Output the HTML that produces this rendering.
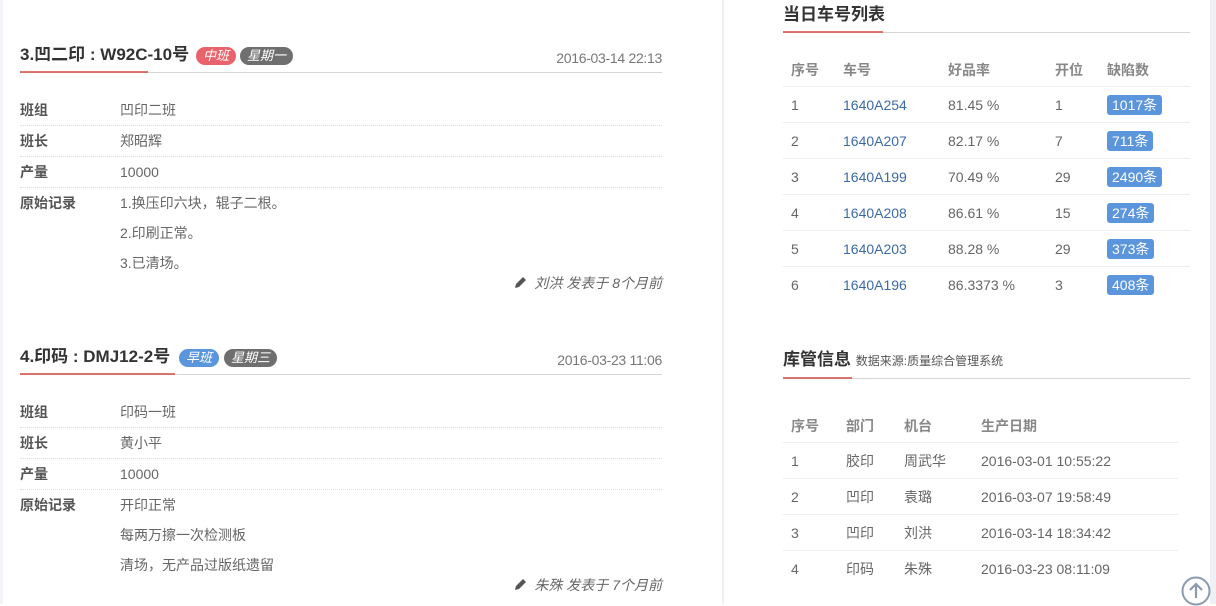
<!DOCTYPE html>
<html><head><meta charset="utf-8"><style>
*{margin:0;padding:0;box-sizing:border-box}
body{width:1216px;height:604px;overflow:hidden;background:#fff;position:relative;font-family:"Liberation Sans","Noto Sans CJK SC",sans-serif;font-size:14px;color:#666}
.a{position:absolute;white-space:nowrap;line-height:20px}
.t{font-size:17px;font-weight:bold;color:#333}
.k{font-weight:bold;color:#555}
.ln{position:absolute;height:1px;background:#d5d5d5}
.rd{position:absolute;height:2px;background:#d9534f;opacity:.8}
.dt{position:absolute;height:0;border-top:1px dotted #ddd}
.sl{position:absolute;height:1px;background:#eee}
.bg{position:absolute;border-radius:9px;color:#fff;font-size:13px;font-style:italic;line-height:18px;height:18px;padding:0 7px}
.bb{position:absolute;background:#5b95dc;color:#fff;border-radius:3px;height:20px;line-height:20px;padding:0 5px;font-size:14px}
.h{font-weight:bold;color:#888}
.lk{color:#3b6aa8}
.dd{color:#777;font-size:14px;letter-spacing:-0.3px}
</style></head><body>
<div style="position:absolute;left:0;top:0;width:3px;height:604px;background:#f2f4f7"></div>
<div style="position:absolute;left:722px;top:0;width:2px;height:604px;background:#f0f0f0"></div>
<div style="position:absolute;left:1210px;top:0;width:6px;height:604px;background:#eef0f3"></div>

<!-- block 1 -->
<div class="a t" style="left:20px;top:45px">3.凹二印 : W92C-10号</div>
<div class="bg" style="left:196px;top:47px;background:#e8636b">中班</div>
<div class="bg" style="left:240px;top:47px;background:#6f6f6f">星期一</div>
<div class="a dd" style="right:554px;top:48px">2016-03-14 22:13</div>
<div class="ln" style="left:20px;top:72px;width:642px"></div>
<div class="rd" style="left:20px;top:71px;width:128px"></div>
<div class="a k" style="left:20px;top:100px">班组</div><div class="a" style="left:120px;top:100px">凹印二班</div>
<div class="dt" style="left:20px;top:125px;width:642px"></div>
<div class="a k" style="left:20px;top:131px">班长</div><div class="a" style="left:120px;top:131px">郑昭辉</div>
<div class="dt" style="left:20px;top:156px;width:642px"></div>
<div class="a k" style="left:20px;top:162px">产量</div><div class="a" style="left:120px;top:162px">10000</div>
<div class="dt" style="left:20px;top:187px;width:642px"></div>
<div class="a k" style="left:20px;top:193px">原始记录</div>
<div class="a" style="left:120px;top:193px">1.换压印六块，辊子二根。</div>
<div class="a" style="left:120px;top:223px">2.印刷正常。</div>
<div class="a" style="left:120px;top:253px">3.已清场。</div>
<svg style="position:absolute;left:514px;top:276px" width="13" height="13" viewBox="0 0 13 13"><path d="M9 1l3 3-7 7-4 1 1-4z" fill="#555"/></svg>
<div class="a" style="right:554px;top:273px;font-style:italic">刘洪 发表于 8个月前</div>

<!-- block 2 -->
<div class="a t" style="left:20px;top:347px">4.印码 : DMJ12-2号</div>
<div class="bg" style="left:179px;top:349px;background:#5b95dc">早班</div>
<div class="bg" style="left:224px;top:349px;background:#6f6f6f">星期三</div>
<div class="a dd" style="right:554px;top:350px">2016-03-23 11:06</div>
<div class="ln" style="left:20px;top:374px;width:642px"></div>
<div class="rd" style="left:20px;top:373px;width:155px"></div>
<div class="a k" style="left:20px;top:402px">班组</div><div class="a" style="left:120px;top:402px">印码一班</div>
<div class="dt" style="left:20px;top:427px;width:642px"></div>
<div class="a k" style="left:20px;top:433px">班长</div><div class="a" style="left:120px;top:433px">黄小平</div>
<div class="dt" style="left:20px;top:458px;width:642px"></div>
<div class="a k" style="left:20px;top:464px">产量</div><div class="a" style="left:120px;top:464px">10000</div>
<div class="dt" style="left:20px;top:489px;width:642px"></div>
<div class="a k" style="left:20px;top:495px">原始记录</div>
<div class="a" style="left:120px;top:495px">开印正常</div>
<div class="a" style="left:120px;top:525px">每两万擦一次检测板</div>
<div class="a" style="left:120px;top:555px">清场，无产品过版纸遗留</div>
<svg style="position:absolute;left:514px;top:578px" width="13" height="13" viewBox="0 0 13 13"><path d="M9 1l3 3-7 7-4 1 1-4z" fill="#555"/></svg>
<div class="a" style="right:554px;top:575px;font-style:italic">朱殊 发表于 7个月前</div>

<!-- right 1 -->
<div class="a t" style="left:783px;top:5px">当日车号列表</div>
<div class="ln" style="left:783px;top:32px;width:407px"></div>
<div class="rd" style="left:783px;top:31px;width:100px"></div>
<div class="a h" style="left:791px;top:60px">序号</div><div class="a h" style="left:843px;top:60px">车号</div><div class="a h" style="left:948px;top:60px">好品率</div><div class="a h" style="left:1055px;top:60px">开位</div><div class="a h" style="left:1107px;top:60px">缺陷数</div>
<div class="sl" style="left:783px;top:86px;width:407px"></div>
<div class="a" style="left:791px;top:95px">1</div><div class="a lk" style="left:843px;top:95px">1640A254</div><div class="a" style="left:948px;top:95px">81.45 %</div><div class="a" style="left:1055px;top:95px">1</div><div class="bb" style="left:1107px;top:95px">1017条</div>
<div class="sl" style="left:783px;top:122px;width:407px"></div>
<div class="a" style="left:791px;top:131px">2</div><div class="a lk" style="left:843px;top:131px">1640A207</div><div class="a" style="left:948px;top:131px">82.17 %</div><div class="a" style="left:1055px;top:131px">7</div><div class="bb" style="left:1107px;top:131px">711条</div>
<div class="sl" style="left:783px;top:158px;width:407px"></div>
<div class="a" style="left:791px;top:167px">3</div><div class="a lk" style="left:843px;top:167px">1640A199</div><div class="a" style="left:948px;top:167px">70.49 %</div><div class="a" style="left:1055px;top:167px">29</div><div class="bb" style="left:1107px;top:167px">2490条</div>
<div class="sl" style="left:783px;top:194px;width:407px"></div>
<div class="a" style="left:791px;top:203px">4</div><div class="a lk" style="left:843px;top:203px">1640A208</div><div class="a" style="left:948px;top:203px">86.61 %</div><div class="a" style="left:1055px;top:203px">15</div><div class="bb" style="left:1107px;top:203px">274条</div>
<div class="sl" style="left:783px;top:230px;width:407px"></div>
<div class="a" style="left:791px;top:239px">5</div><div class="a lk" style="left:843px;top:239px">1640A203</div><div class="a" style="left:948px;top:239px">88.28 %</div><div class="a" style="left:1055px;top:239px">29</div><div class="bb" style="left:1107px;top:239px">373条</div>
<div class="sl" style="left:783px;top:266px;width:407px"></div>
<div class="a" style="left:791px;top:275px">6</div><div class="a lk" style="left:843px;top:275px">1640A196</div><div class="a" style="left:948px;top:275px">86.3373 %</div><div class="a" style="left:1055px;top:275px">3</div><div class="bb" style="left:1107px;top:275px">408条</div>

<!-- right 2 -->
<div class="a t" style="left:783px;top:350px">库管信息 <span style="font-size:12px;font-weight:normal;color:#555">数据来源:质量综合管理系统</span></div>
<div class="ln" style="left:783px;top:378px;width:407px"></div>
<div class="rd" style="left:783px;top:377px;width:69px"></div>
<div class="a h" style="left:791px;top:416px">序号</div><div class="a h" style="left:846px;top:416px">部门</div><div class="a h" style="left:904px;top:416px">机台</div><div class="a h" style="left:981px;top:416px">生产日期</div>
<div class="sl" style="left:783px;top:442px;width:395px"></div>
<div class="a" style="left:791px;top:451px">1</div><div class="a" style="left:846px;top:451px">胶印</div><div class="a" style="left:904px;top:451px">周武华</div><div class="a" style="left:981px;top:451px">2016-03-01 10:55:22</div>
<div class="sl" style="left:783px;top:478px;width:395px"></div>
<div class="a" style="left:791px;top:487px">2</div><div class="a" style="left:846px;top:487px">凹印</div><div class="a" style="left:904px;top:487px">袁璐</div><div class="a" style="left:981px;top:487px">2016-03-07 19:58:49</div>
<div class="sl" style="left:783px;top:514px;width:395px"></div>
<div class="a" style="left:791px;top:523px">3</div><div class="a" style="left:846px;top:523px">凹印</div><div class="a" style="left:904px;top:523px">刘洪</div><div class="a" style="left:981px;top:523px">2016-03-14 18:34:42</div>
<div class="sl" style="left:783px;top:550px;width:395px"></div>
<div class="a" style="left:791px;top:559px">4</div><div class="a" style="left:846px;top:559px">印码</div><div class="a" style="left:904px;top:559px">朱殊</div><div class="a" style="left:981px;top:559px">2016-03-23 08:11:09</div>

<svg style="position:absolute;left:1181px;top:576px" width="30" height="30" viewBox="0 0 30 30"><circle cx="15" cy="15" r="13.5" fill="#fff" stroke="#8a9bb0" stroke-width="2"/><path d="M15 22V8M9 14l6-6 6 6" fill="none" stroke="#8a9bb0" stroke-width="2.2"/></svg>
</body></html>
